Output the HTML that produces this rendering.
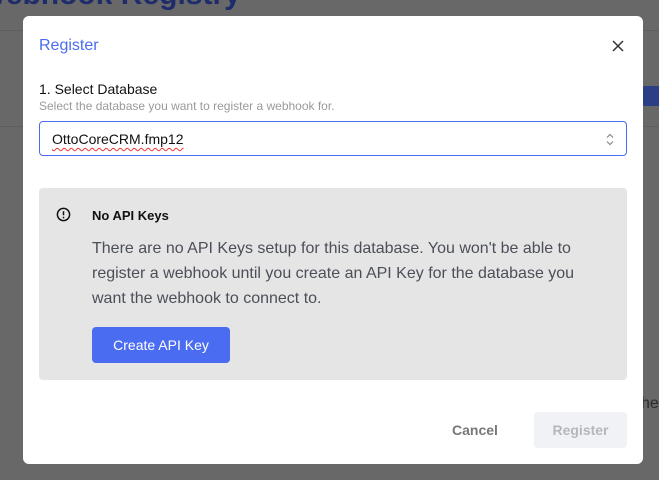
<!DOCTYPE html>
<html><head><meta charset="utf-8"><style>
*{box-sizing:border-box;margin:0;padding:0}
body{width:659px;height:480px;overflow:hidden;background:#686868;font-family:"Liberation Sans",sans-serif;position:relative}
.bgtitle{position:absolute;left:-22px;top:-22px;font-size:30px;font-weight:bold;color:#1f2c6b;white-space:nowrap}
.line1{position:absolute;left:0;top:30px;width:659px;height:1px;background:#5e5e5e}
.line2{position:absolute;left:0;top:126px;width:659px;height:1px;background:#5e5e5e}
.pill{position:absolute;left:643px;top:86px;width:20px;height:20px;background:#2c3e86}
.hey{position:absolute;left:641px;top:395px;font-size:16px;color:#2a2a2a}
.modal{position:absolute;left:23px;top:16px;width:620px;height:448px;background:#fff;border-radius:6px}
.title{position:absolute;left:16px;top:21px;font-size:16px;color:#4a6cf0}
.x{position:absolute;left:588px;top:23px}
.lbl{position:absolute;left:16px;top:65px;font-size:14px;color:#111}
.sub{position:absolute;left:16px;top:83px;font-size:12px;color:#9a9a9a}
.sel{position:absolute;left:16px;top:105px;width:588px;height:35px;border:1px solid #4a6cf0;border-radius:4px}
.sel span{position:absolute;left:12px;top:9px;font-size:14px;color:#111;text-decoration:underline wavy #e33;text-decoration-thickness:1px;text-underline-offset:3px}
.sel svg{position:absolute;right:12px;top:11px}
.alert{position:absolute;left:16px;top:172px;width:588px;height:192px;background:#e5e5e5;border-radius:4px}
.ic{position:absolute;left:17px;top:19px}
.ah{position:absolute;left:53px;top:20px;font-size:13px;font-weight:bold;color:#111}
.at{position:absolute;left:53px;top:48px;width:520px;font-size:16px;line-height:25px;color:#4b4f58}
.cbtn{position:absolute;left:53px;top:139px;width:138px;height:36px;background:#4a6cf0;border-radius:4px;color:#fff;font-size:14px;text-align:center;line-height:36px}
.cancel{position:absolute;left:429px;top:406px;font-size:14px;color:#777;font-weight:bold}
.reg{position:absolute;left:511px;top:396px;width:93px;height:36px;background:#f1f2f5;border-radius:4px;color:#b5b7bc;font-size:14px;text-align:center;line-height:36px;font-weight:bold}
</style></head><body>
<div class="bgtitle">Webhook Registry</div>
<div class="line1"></div><div class="line2"></div>
<div class="pill"></div>
<div class="hey">hey</div>
<div class="modal">
<div class="title">Register</div>
<svg class="x" width="14" height="14" viewBox="0 0 14 14"><path d="M2 2L12 12M12 2L2 12" stroke="#333" stroke-width="1.5"/></svg>
<div class="lbl">1. Select Database</div>
<div class="sub">Select the database you want to register a webhook for.</div>
<div class="sel"><span>OttoCoreCRM.fmp12</span><svg width="8" height="13" viewBox="0 0 8 13"><path d="M1 4.5L4 1.5L7 4.5M1 8.5L4 11.5L7 8.5" fill="none" stroke="#888" stroke-width="1.2"/></svg></div>
<div class="alert">
<svg class="ic" width="15" height="15" viewBox="0 0 16 16"><circle cx="8" cy="8" r="6.5" fill="none" stroke="#111" stroke-width="1.6"/><path d="M8 4.5V8.8" stroke="#111" stroke-width="1.6"/><circle cx="8" cy="11.2" r="0.9" fill="#111"/></svg>
<div class="ah">No API Keys</div>
<div class="at">There are no API Keys setup for this database. You won't be able to register a webhook until you create an API Key for the database you want the webhook to connect to.</div>
<div class="cbtn">Create API Key</div>
</div>
<div class="cancel">Cancel</div>
<div class="reg">Register</div>
</div>
</body></html>
